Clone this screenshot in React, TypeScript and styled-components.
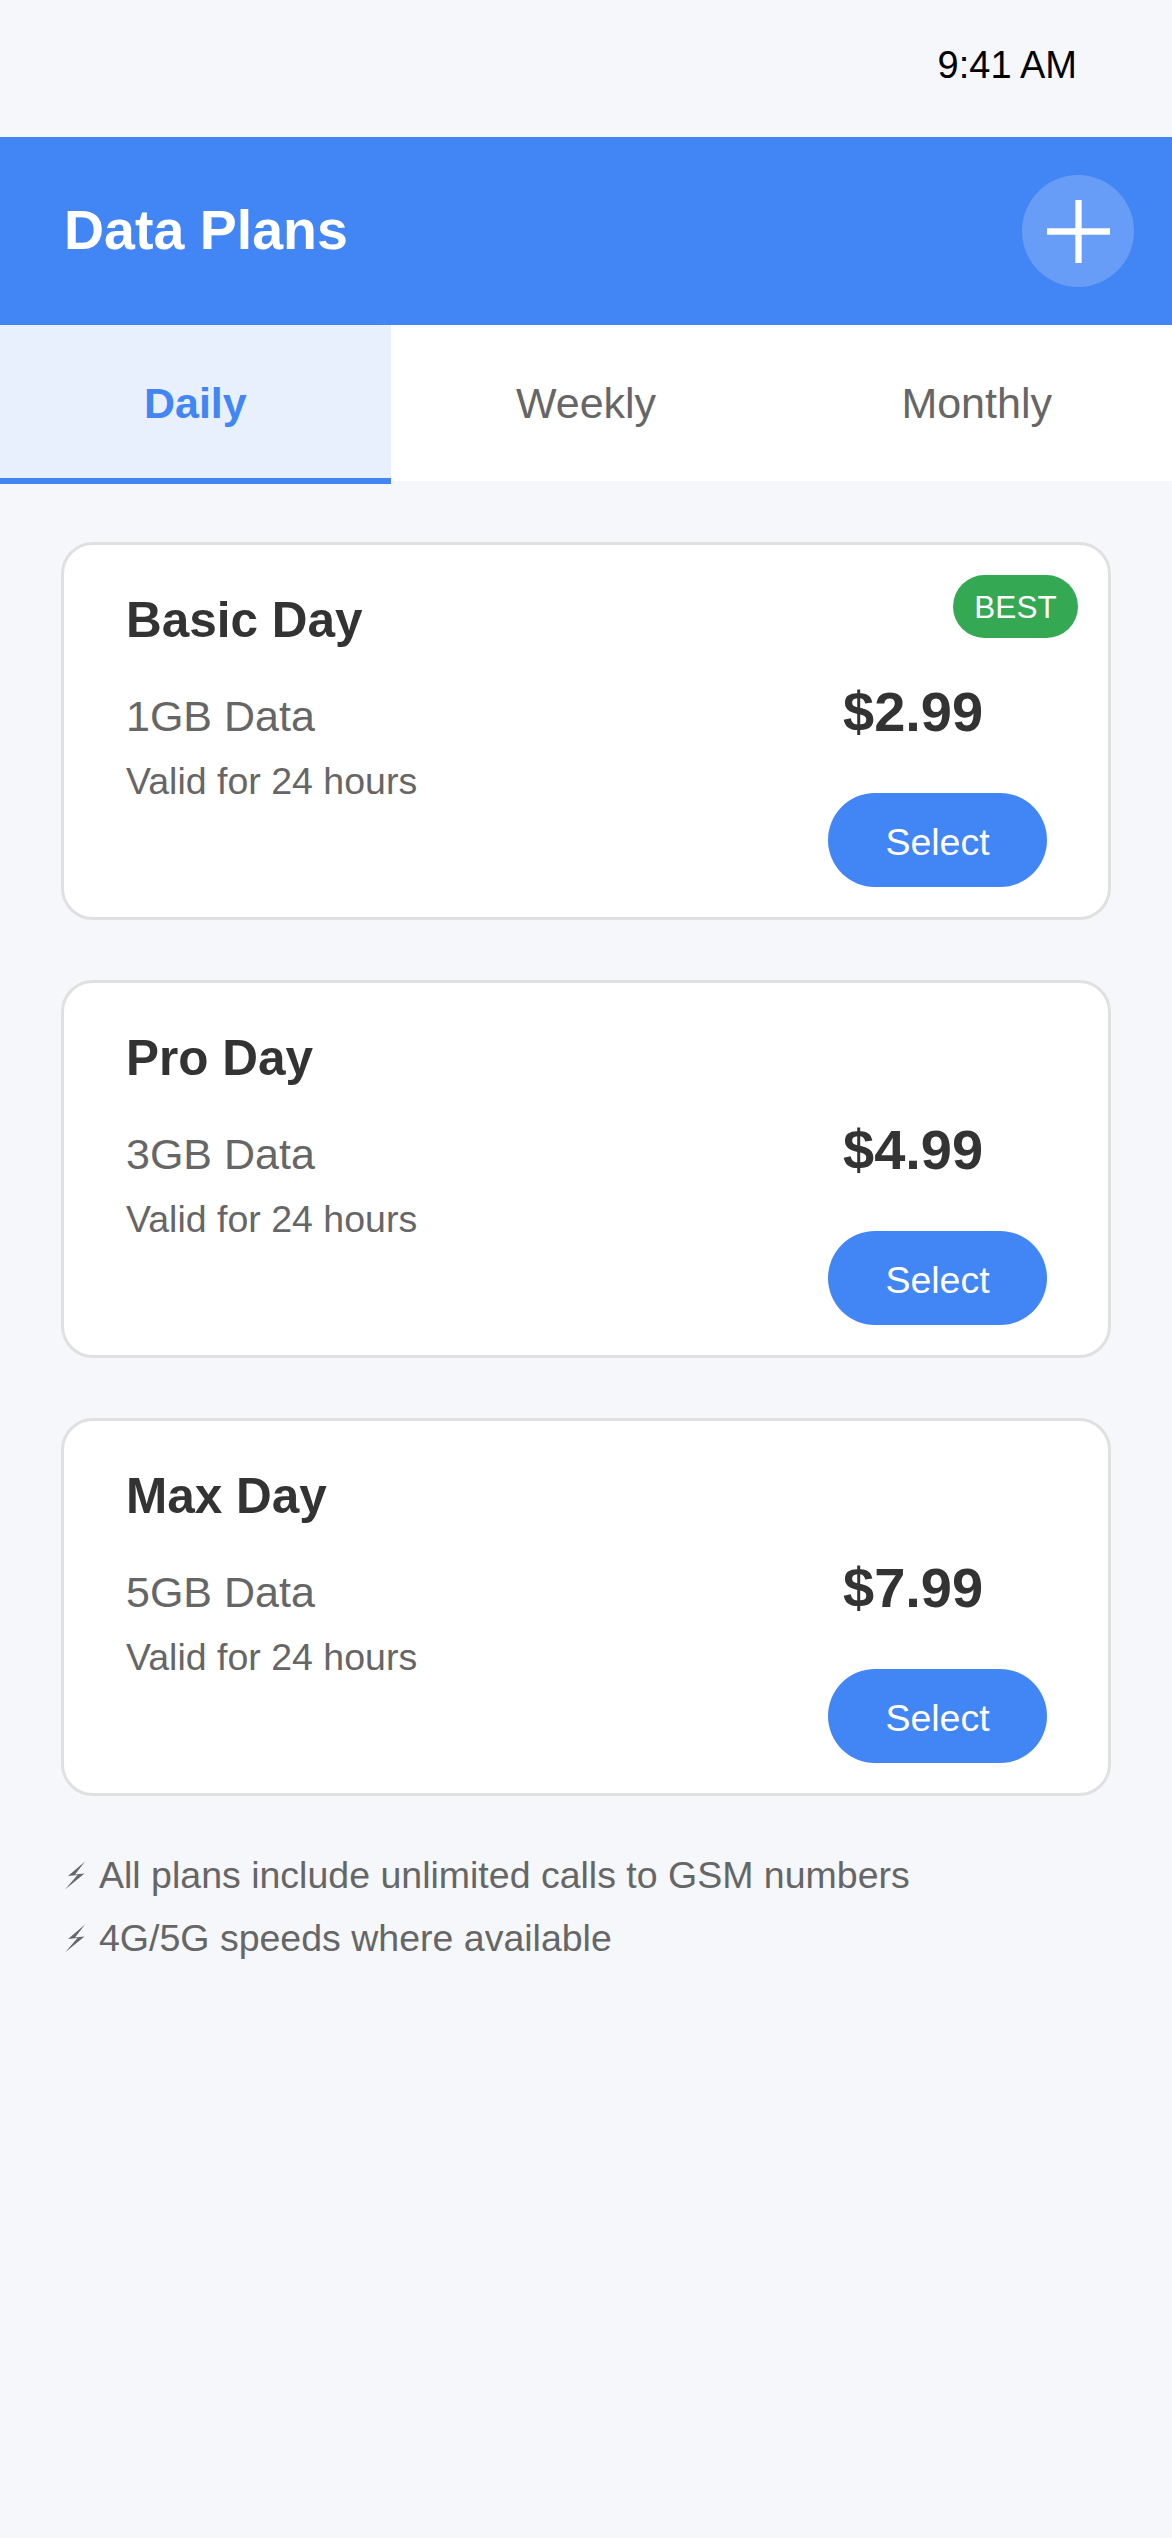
import { createGlobalStyle } from "styled-components";
import styled from "styled-components";

const GlobalStyle = createGlobalStyle`
  html, body {
    margin: 0;
    padding: 0;
    background: #f5f7fb;
    font-family: "Liberation Sans", Arial, sans-serif;
  }
  * {
    box-sizing: border-box;
  }
`;

const Root = styled.div`
  width: 1172px;
  min-height: 2538px;
  background: #f5f7fb;
`;

const StatusBar = styled.div`
  height: 137px;
  display: flex;
  align-items: center;
  justify-content: flex-end;
  padding: 0 95px 7px 0;
  font-size: 38px;
  color: #000;
`;

const Header = styled.header`
  height: 188px;
  background: #4285f4;
  display: flex;
  align-items: center;
  justify-content: space-between;
  padding: 0 38px 3px 64px;
`;

const Title = styled.h1`
  margin: 0;
  font-size: 55.5px;
  font-weight: 700;
  color: #fff;
`;

const AddButton = styled.button`
  width: 112px;
  height: 112px;
  border: 0;
  border-radius: 50%;
  padding: 0;
  margin-top: 3px;
  background: rgba(255, 255, 255, 0.2);
  display: flex;
  align-items: center;
  justify-content: center;
`;

const Tabs = styled.nav`
  display: flex;
  height: 156px;
  background: #fff;
`;

const Tab = styled.div<{ $active?: boolean }>`
  flex: 1;
  height: ${(p) => (p.$active ? "159px" : "156px")};
  padding-top: ${(p) => (p.$active ? "3px" : "0")};
  display: flex;
  align-items: center;
  justify-content: center;
  font-size: 43px;
  font-weight: ${(p) => (p.$active ? 700 : 400)};
  color: ${(p) => (p.$active ? "#4285f4" : "#666")};
  background: ${(p) => (p.$active ? "#e8f0fe" : "transparent")};
  border-bottom: ${(p) => (p.$active ? "6px solid #4285f4" : "0")};
`;

const Content = styled.main`
  padding: 61px 61px 0;
  display: flex;
  flex-direction: column;
  gap: 60px;
`;

const Card = styled.section`
  position: relative;
  height: 378px;
  background: #fff;
  border: 3px solid #e0e0e0;
  border-radius: 32px;
  padding: 45px 61px 30px 62px;
  display: flex;
  justify-content: space-between;
`;

const Info = styled.div`
  display: flex;
  flex-direction: column;
`;

const PlanName = styled.h2`
  margin: 0 0 40px;
  font-size: 49.5px;
  line-height: 60px;
  font-weight: 700;
  color: #333;
`;

const PlanData = styled.div`
  font-size: 43px;
  line-height: 52px;
  color: #666;
  margin-bottom: 17px;
`;

const PlanValid = styled.div`
  font-size: 37.5px;
  line-height: 44px;
  color: #666;
`;

const Side = styled.div`
  display: flex;
  flex-direction: column;
  align-items: center;
  padding-top: 89px;
`;

const Price = styled.div`
  font-size: 56px;
  line-height: 66px;
  font-weight: 700;
  color: #333;
  margin-bottom: 48px;
  align-self: flex-start;
  margin-left: 15px;
`;

const SelectButton = styled.button`
  width: 219px;
  height: 94px;
  border: 0;
  border-radius: 47px;
  padding: 5px 0 0;
  background: #4285f4;
  color: #fff;
  font-family: inherit;
  font-size: 37.5px;
`;

const Badge = styled.span`
  position: absolute;
  top: 30px;
  right: 30px;
  width: 125px;
  height: 63px;
  border-radius: 32px;
  padding-top: 1px;
  background: #34a853;
  color: #fff;
  font-size: 31.5px;
  display: flex;
  align-items: center;
  justify-content: center;
`;

const Notes = styled.div`
  padding: 57px 61px 0;
  display: flex;
  flex-direction: column;
  gap: 18px;
`;

const Note = styled.div`
  display: flex;
  align-items: center;
  height: 45px;
  font-size: 37.5px;
  color: #666;
`;

const Bolt = styled.svg`
  width: 22px;
  height: 29px;
  margin: 0 12px 0 4px;
  flex-shrink: 0;
`;

const plans = [
  { name: "Basic Day", data: "1GB Data", price: "$2.99", best: true },
  { name: "Pro Day", data: "3GB Data", price: "$4.99" },
  { name: "Max Day", data: "5GB Data", price: "$7.99" },
];

const notes = [
  "All plans include unlimited calls to GSM numbers",
  "4G/5G speeds where available",
];

const App = () => {
  return (
    <Root>
      <GlobalStyle />
      <StatusBar>9:41 AM</StatusBar>
      <Header>
        <Title>Data Plans</Title>
        <AddButton>
          <svg width="63" height="63" viewBox="0 0 63 63">
            <path d="M31.5 0v63M0 31.5h63" stroke="#fff" strokeWidth="6.3" fill="none" />
          </svg>
        </AddButton>
      </Header>
      <Tabs>
        <Tab $active>Daily</Tab>
        <Tab>Weekly</Tab>
        <Tab>Monthly</Tab>
      </Tabs>
      <Content>
        {plans.map((plan) => (
          <Card key={plan.name}>
            {plan.best && <Badge>BEST</Badge>}
            <Info>
              <PlanName>{plan.name}</PlanName>
              <PlanData>{plan.data}</PlanData>
              <PlanValid>Valid for 24 hours</PlanValid>
            </Info>
            <Side>
              <Price>{plan.price}</Price>
              <SelectButton>Select</SelectButton>
            </Side>
          </Card>
        ))}
      </Content>
      <Notes>
        {notes.map((note) => (
          <Note key={note}>
            <Bolt viewBox="0 0 22 29">
              <path d="M20 0.5 3 15l9.500-1L0 28.500 19.500 12.500l-9.500 1z" fill="#666" />
            </Bolt>
            {note}
          </Note>
        ))}
      </Notes>
    </Root>
  );
};

export default App;
